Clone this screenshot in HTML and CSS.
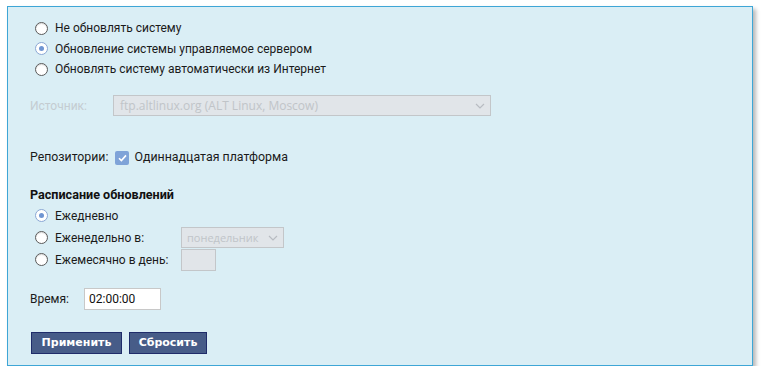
FILE: index.html
```html
<!DOCTYPE html>
<html>
<head>
<meta charset="utf-8">
<link rel="stylesheet" href="styles.css">
</head>
<body>
<div class="panel">
  <div class="modes">
    <label class="radio-row"><span class="radio"></span><span>Не обновлять систему</span></label>
    <label class="radio-row"><span class="radio on"></span><span>Обновление системы управляемое сервером</span></label>
    <label class="radio-row"><span class="radio"></span><span>Обновлять систему автоматически из Интернет</span></label>
  </div>
  <div class="source-row">
    <span class="source-label">Источник:</span>
    <div class="select wide"><span>ftp.altlinux.org (ALT Linux, Moscow)</span><svg class="chev" width="10" height="6" viewBox="0 0 10 6"><path d="M1 1 L5 5 L9 1" fill="none" stroke="#b8bcc2" stroke-width="1.2"/></svg></div>
  </div>
  <div class="repo-row">
    <span class="repo-label">Репозитории:</span>
    <span class="check"><svg width="9" height="8" viewBox="0 0 9 8"><path d="M1 4.2 L3.4 6.6 L8 1.4" fill="none" stroke="#fff" stroke-width="1.6"/></svg></span>
    <span class="repo-name">Одиннадцатая платформа</span>
  </div>
  <div class="sched-title">Расписание обновлений</div>
  <div class="sched">
    <div class="radio-row"><span class="radio on"></span><span>Ежедневно</span></div>
    <div class="radio-row"><span class="radio"></span><span class="sched-label">Еженедельно в:</span><div class="select day"><span>понедельник</span><svg class="chev" width="10" height="6" viewBox="0 0 10 6"><path d="M1 1 L5 5 L9 1" fill="none" stroke="#b8bcc2" stroke-width="1.2"/></svg></div></div>
    <div class="radio-row"><span class="radio"></span><span class="sched-label">Ежемесячно в день:</span><div class="box"></div></div>
  </div>
  <div class="time-row">
    <span class="time-label">Время:</span>
    <div class="time-input">02:00:00</div>
  </div>
  <div class="buttons">
    <button class="btn apply">Применить</button>
    <button class="btn reset">Сбросить</button>
  </div>
</div>
</body>
</html>
```
FILE: styles.css
```css
html, body { margin: 0; padding: 0; background: #ffffff; }
body { font-family: Roboto, "Liberation Sans", sans-serif; font-size: 12px; color: #1a1a1a; }
.panel {
  margin: 6px 0 0 7px;
  width: 744px;
  height: 358px;
  box-sizing: content-box;
  border: 1px solid #3ea6d6;
  background: #daeef5;
  box-shadow: 3px 3px 4px rgba(0,0,0,0.28);
  padding: 0;
}
.modes { padding: 11px 0 0 27px; display: flex; flex-direction: column; }
.radio-row { display: flex; align-items: center; height: 20.5px; }
.radio {
  width: 11px; height: 11px; border-radius: 50%;
  border: 1px solid #5a5a5a; background: #fff;
  margin-right: 7px; box-sizing: content-box; position: relative;
  box-shadow: inset 0 1px 1px rgba(0,0,0,0.15);
}
.radio.on { border-color: #8aa7d4; box-shadow: none; }
.radio.on::after {
  content: ""; position: absolute; left: 3px; top: 3px; width: 5px; height: 5px;
  border-radius: 50%; background: #6f95d2;
}
.source-row { display: flex; align-items: center; margin: 16px 0 0 22px; height: 20px; }
.source-label { color: #c4ccd1; width: 83px; }
.select {
  display: flex; align-items: center; justify-content: space-between;
  background: #e1e5e9; border: 1px solid #c3c6c9; box-sizing: border-box;
  font-family: "Open Sans", "Noto Sans", sans-serif; color: #c0c4c8;
}
.select.wide { width: 378px; height: 21px; padding: 0 5px 0 6px; font-size: 12px; }
.chev { margin-top: 1px; flex-shrink: 0; }
.repo-row { display: flex; align-items: center; margin: 33px 0 0 22px; height: 16px; }
.repo-label { margin-right: 7px; font-size: 12.3px; }
.repo-name { font-size: 12.4px; }
.check {
  width: 14px; height: 14px; border-radius: 2px; background: #7fa3d8;
  display: inline-flex; align-items: center; justify-content: center; margin-right: 5px; margin-top: 2px;
}
.sched-title { font-weight: bold; font-size: 12.6px; margin: 22px 0 0 22px; height: 16px; line-height: 16px; color: #111; }
.sched { padding: 2px 0 0 27px; display: flex; flex-direction: column; }
.sched .radio-row { height: 22px; }
.sched-label { width: 126px; }
.select.day { width: 103px; height: 21px; padding: 0 5px 0 5px; font-size: 11px; }
.box { width: 35px; height: 22px; background: #e1e5e9; border: 1px solid #c3c6c9; box-sizing: border-box; }
.time-row { display: flex; align-items: center; margin: 17px 0 0 22px; height: 22px; }
.time-label { width: 54px; }
.time-input {
  width: 77px; height: 22px; box-sizing: border-box; background: #fff; border: 1px solid #c8c8c8;
  padding: 0 4px; display: flex; align-items: center; color: #111;
}
.buttons { display: flex; gap: 7px; margin: 22px 0 0 23px; }
.btn {
  height: 22px; box-sizing: border-box; background: #475c88; border: 1px solid #1f2c6a; color: #fff;
  font-family: "DejaVu Sans", sans-serif; font-weight: bold; font-size: 11px; padding: 0; cursor: pointer;
}
.btn.apply { width: 91px; }
.btn.reset { width: 78px; }
```
